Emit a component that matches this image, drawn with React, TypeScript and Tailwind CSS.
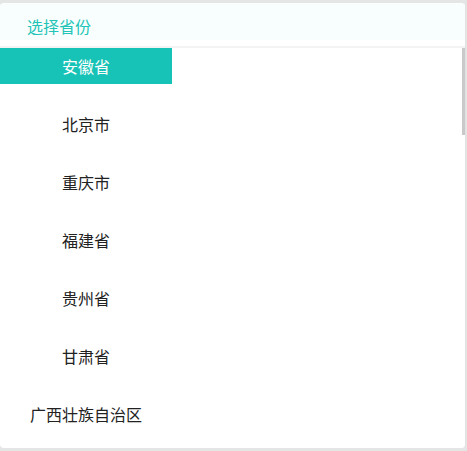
const provinces = ["安徽省", "北京市", "重庆市", "福建省", "贵州省", "甘肃省", "广西壮族自治区"];

export default function App() {
  const active = 0;
  return (
    <div
      className="h-[451px] w-[467px] overflow-hidden bg-[#e4e6e5] pt-[3px]"
      style={{ fontFamily: '"Noto Sans CJK SC", "Noto Sans", sans-serif' }}
    >
      <div className="flex h-[445px] w-[466px] flex-col overflow-hidden rounded-[4px] border-r border-[#e2e2e2] bg-white">
        <div className="mt-[1px] flex h-[36px] items-center bg-[#f8fefd] pl-[27px] pt-[8px] text-[16px] text-[#22c4b7]">
          选择省份
        </div>
        <div className="h-[8px] border-b-2 border-[#f3f3f3]" />
        <div className="relative flex-1">
          <ul className="w-[172px]">
            {provinces.map((p, i) => (
              <li
                key={p}
                className={
                  i === active
                    ? "mb-[11px] flex h-[36px] items-center justify-center bg-[#17c3b6] text-[16px] text-white"
                    : "flex h-[58px] items-center justify-center text-[16px] text-[#222]"
                }
              >
                {p}
              </li>
            ))}
          </ul>
          <div className="absolute right-0 top-0 h-[87px] w-[3px] bg-[#c9c9c9]" />
        </div>
      </div>
    </div>
  );
}
